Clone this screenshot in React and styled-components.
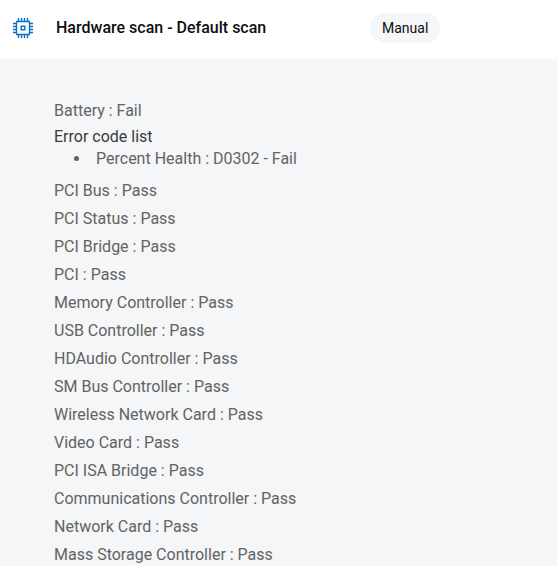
import React from 'react';
import styled, { createGlobalStyle } from 'styled-components';

const GlobalStyle = createGlobalStyle`
  * {
    box-sizing: border-box;
  }

  body {
    margin: 0;
    background-color: #f4f6f8;
    font-family: Roboto, 'Liberation Sans', sans-serif;
    font-size: 16px;
    color: #636363;
  }
`;

const Header = styled.header`
  display: flex;
  align-items: center;
  height: 59px;
  padding: 0 12px 4px;
  background-color: #ffffff;
`;

const ChipIcon = styled.svg`
  flex: none;
  width: 22px;
  height: 22px;
  margin-right: 22px;
`;

const Title = styled.h1`
  flex: 0 1 314px;
  margin: 0;
  font-size: 16px;
  font-weight: 500;
  line-height: 24px;
  color: #0e0e0e;
`;

const Tag = styled.span`
  padding: 0 12px;
  border-radius: 15px;
  background-color: #f4f6f8;
  font-size: 14px;
  line-height: 30px;
  color: #0e0e0e;
`;

const Results = styled.main`
  padding: 38px 54px 0;
`;

const List = styled.ul`
  margin: 0;
  padding: 0;
  list-style: none;
`;

const Result = styled.li`
  line-height: 28px;
`;

const ErrorTitle = styled.div`
  line-height: 24px;
  color: #3a3a3a;
`;

const ErrorList = styled.ul`
  margin: 0 0 8px;
  padding-left: 37px;
  line-height: 20px;
  list-style: disc;
`;

const ErrorItem = styled.li`
  padding-left: 5px;
`;

const results = [
  { name: 'Battery', status: 'Fail', errors: ['Percent Health : D0302 - Fail'] },
  { name: 'PCI Bus', status: 'Pass' },
  { name: 'PCI Status', status: 'Pass' },
  { name: 'PCI Bridge', status: 'Pass' },
  { name: 'PCI', status: 'Pass' },
  { name: 'Memory Controller', status: 'Pass' },
  { name: 'USB Controller', status: 'Pass' },
  { name: 'HDAudio Controller', status: 'Pass' },
  { name: 'SM Bus Controller', status: 'Pass' },
  { name: 'Wireless Network Card', status: 'Pass' },
  { name: 'Video Card', status: 'Pass' },
  { name: 'PCI ISA Bridge', status: 'Pass' },
  { name: 'Communications Controller', status: 'Pass' },
  { name: 'Network Card', status: 'Pass' },
  { name: 'Mass Storage Controller', status: 'Pass' },
];

const App = () => {
  return (
    <>
      <GlobalStyle />
      <Header>
        <ChipIcon viewBox="0 0 22 22" fill="none" stroke="#0672cb" strokeWidth="1.4" aria-hidden="true">
          <rect x="4.5" y="4.5" width="13" height="13" rx="0.5" />
          <rect x="9.2" y="9.2" width="3.6" height="3.6" />
          <path d="M6.5 1v3M9.5 1v3M12.5 1v3M15.5 1v3M6.5 18v3M9.5 18v3M12.5 18v3M15.5 18v3M1 6.5h3M1 9.5h3M1 12.5h3M1 15.5h3M18 6.5h3M18 9.5h3M18 12.5h3M18 15.5h3" />
        </ChipIcon>
        <Title>Hardware scan - Default scan</Title>
        <Tag>Manual</Tag>
      </Header>
      <Results>
        <List>
          {results.map((result) => (
            <Result key={result.name}>
              {result.name} : {result.status}
              {result.errors && (
                <>
                  <ErrorTitle>Error code list</ErrorTitle>
                  <ErrorList>
                    {result.errors.map((error) => (
                      <ErrorItem key={error}>{error}</ErrorItem>
                    ))}
                  </ErrorList>
                </>
              )}
            </Result>
          ))}
        </List>
      </Results>
    </>
  );
};

export default App;
